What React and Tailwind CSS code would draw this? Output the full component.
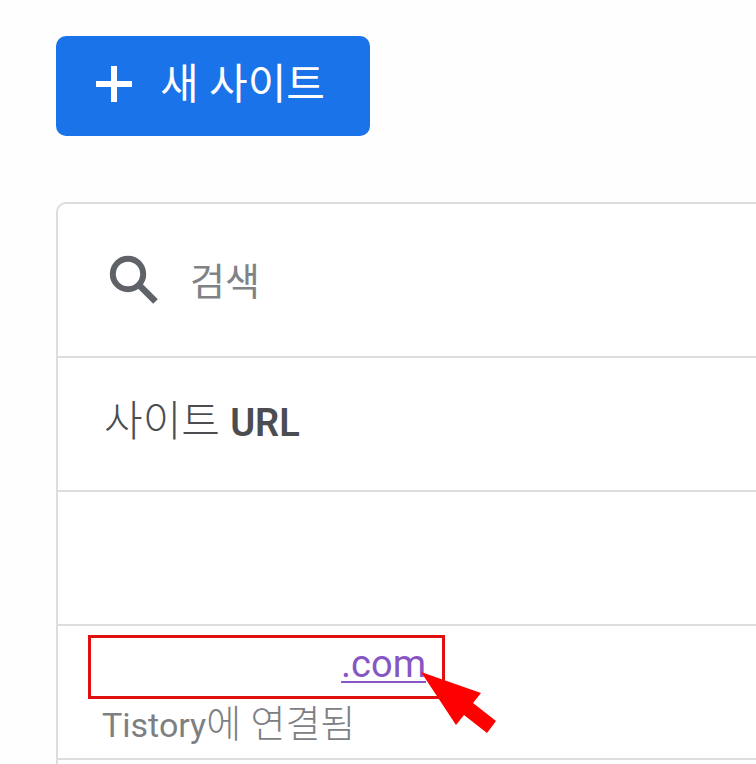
import { useState } from "react";

// Sites shown in the list, the first one has no visible name
const sites = [
  { id: 1, url: "", service: "", status: "" },
  { id: 2, url: ".com", service: "Tistory", status: "에 연결됨" },
];

const PlusIcon = () => (
  <svg viewBox="0 0 60 60" className="size-[60px]" aria-hidden="true">
    <path d="M12 30h36M30 12v36" fill="none" stroke="currentColor" strokeWidth="6" />
  </svg>
);

const SearchIcon = () => (
  <svg viewBox="0 0 64 64" className="size-16 text-[#5f6368]" aria-hidden="true">
    <g fill="none" stroke="currentColor">
      <circle cx="26" cy="26" r="15.2" strokeWidth="6" />
      <path d="M36.5 36.5 53.5 53.5" strokeWidth="6.5" />
    </g>
  </svg>
);

const Pointer = () => (
  <svg
    viewBox="0 0 76 64"
    className="absolute top-[34px] left-[330px] w-[76px] h-16"
    aria-hidden="true"
  >
    <path fill="#ff0000" d="M0 0 60 21 52 31 75 49 66 61 43 43 35 53Z" />
  </svg>
);

const SiteRow = ({ site }) => (
  <tr className="h-[134px] border-t-2 border-[#dcdddf]">
    <td className="pl-[30px] align-top">
      {site.url && (
        <>
          {/* Highlighted link */}
          <div className="relative mt-[9px] w-[357px] h-16 border-[3px] border-[#e01010] pr-4 text-right">
            <a
              href="#site"
              className="text-[38px] leading-[52px] text-[#8755c4] underline decoration-2 underline-offset-4"
            >
              {site.url}
            </a>
            <Pointer />
          </div>
          <p className="pl-3.5 text-[34px] leading-[50px] text-[#7d7f83]">
            {site.service}
            <span className="text-[38px] font-light">{site.status}</span>
          </p>
        </>
      )}
    </td>
  </tr>
);

const App = () => {
  const [search, setSearch] = useState("");

  return (
    <main className="flex min-h-screen flex-col items-start overflow-hidden bg-[#fefefe] pt-9 pl-14 font-['Roboto','Noto_Sans_CJK_KR',sans-serif]">
      {/* New site button */}
      <button
        type="button"
        className="flex h-[100px] w-[314px] items-center rounded-[10px] bg-[#1a73e8] pl-7 pb-1 text-white"
      >
        <PlusIcon />
        <span className="ml-4 text-[42px]">새 사이트</span>
      </button>

      <section className="mt-[66px] w-full flex-1 rounded-tl-[10px] border-t-2 border-l-2 border-[#dcdddf] bg-white">
        {/* Search */}
        <label className="flex h-[152px] items-center pl-11">
          <SearchIcon />
          <input
            type="text"
            aria-label="검색"
            placeholder="검색"
            value={search}
            onChange={(e) => setSearch(e.target.value)}
            className="ml-6 min-w-0 flex-1 bg-transparent pt-1 text-[38px] outline-none placeholder:text-[#808286]"
          />
        </label>

        <table className="w-full border-collapse border-b-2 border-[#dcdddf]">
          <thead>
            <tr className="h-[134px] border-t-2 border-[#dcdddf]">
              <th className="pl-[46px] pb-1.5 text-left text-[42px] font-light text-[#4b4d50]">
                사이트 <span className="text-[38px] font-semibold">URL</span>
              </th>
            </tr>
          </thead>
          <tbody>
            {sites.map((site) => (
              <SiteRow key={site.id} site={site} />
            ))}
          </tbody>
        </table>
      </section>
    </main>
  );
};

export default App;
